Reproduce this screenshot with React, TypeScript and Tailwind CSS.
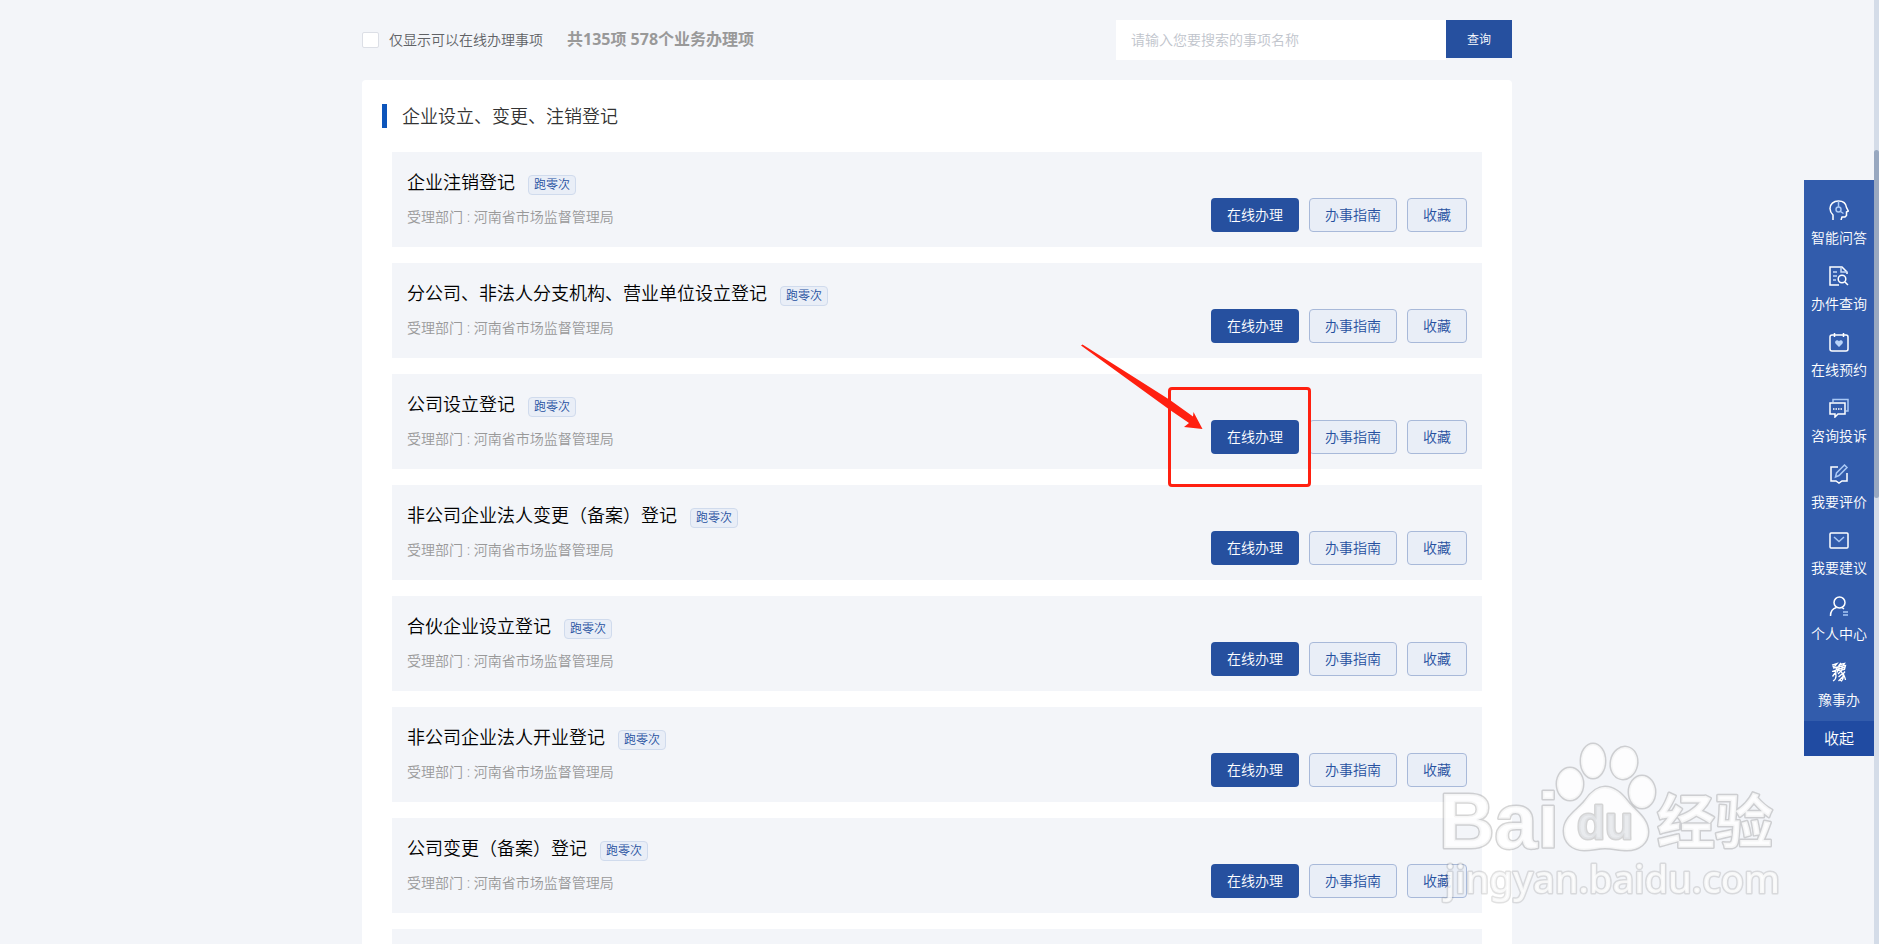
import React, { useState } from 'react';

const items = [
    '企业注销登记',
    '分公司、非法人分支机构、营业单位设立登记',
    '公司设立登记',
    '非公司企业法人变更（备案）登记',
    '合伙企业设立登记',
    '非公司企业法人开业登记',
    '公司变更（备案）登记',
];

const HeadIcon = () => (
    <>
        <path d="M4 20v-5C2 13 1 11 1 8.500C1 4 4.500 1 9.500 1c4.500 0 7.500 2.500 8 6.500l1.800 3.500-1.800 1v3.500l-1.500 1.500h-3l-1 3" />
        <g stroke="#a9c8f5"><path d="M9.500 1v6M11.500 11.500l3 2" /><circle cx="9.500" cy="9.500" r="2.500" /></g>
    </>
);

const DocSearchIcon = () => (
    <>
        <path d="M18 8V6l-5-5H1v18h9" />
        <path d="M12 1v5h6M4 6h4M4 10h4M4 14h3" stroke="#c5d9f7" />
        <circle cx="13" cy="13" r="3.800" />
        <path d="m16 16 3 3" />
    </>
);

const BookingIcon = () => (
    <>
        <rect x="1" y="3" width="18" height="16" rx="2" />
        <path d="M5.500 1v4M14.500 1v4" />
        <path d="M10 15 6.500 11.500c-1.500-2.500 2-4.500 3.500-2.300 1.500-2.200 5-.2 3.500 2.300z" fill="#b9d4fa" stroke="none" />
    </>
);

const ChatIcon = () => (
    <>
        <path d="M4 4V1.500h15V13h-2" stroke="#a9c8f5" />
        <path d="M1 5h15v11H9l-3 3v-3H1z" />
        <path d="M4 11h9" strokeDasharray="1.500 1" />
    </>
);

const RateIcon = () => (
    <>
        <path d="M9 3H2v14h5l3 2 3-2h5V9" />
        <path d="m6.500 13 1-4 8-8 2.500 2.500-8 8z" stroke="#a9c8f5" />
    </>
);

const MailIcon = () => (
    <>
        <rect x="1" y="3" width="18" height="15" rx="1" />
        <path d="m5 7 5 4.500L15 7" stroke="#a9c8f5" />
    </>
);

const PersonIcon = () => (
    <>
        <circle cx="10.500" cy="6.500" r="5.500" />
        <path d="M1.500 20c0-4.500 2-7.500 6-8.500M13 11.500l2 1.500" />
        <path d="M14 16h5M14 19h5" stroke="#a9c8f5" />
    </>
);

const YuIcon = () => (
    <g strokeWidth="1.300">
        <path d="M3 3 8 1.500 6 4 3.500 4.500M4 6l5-1-2 3M3 9.500l6-2-1 3M6.500 8.500 7 14c0 3-1 4-3 5M6 11l-2.500 3.500" />
        <path d="m12 1-2.500 3M11 2.500l4.500-1L14 4M10 4.500l6.500-1-1 4-6 1zM13 4v4M10 6.500l6-1" />
        <path d="M13 8l-4 4M12 9.500c3 2.500 3 7 .5 9.500l-1.500-1M13 12l-3.500 3M14 14.500 9.500 19M16 9.500 14 12M14 11c1 3 2 4 2.500 7" />
    </g>
);

const tools = [
    { label: '智能问答', icon: <HeadIcon /> },
    { label: '办件查询', icon: <DocSearchIcon /> },
    { label: '在线预约', icon: <BookingIcon /> },
    { label: '咨询投诉', icon: <ChatIcon /> },
    { label: '我要评价', icon: <RateIcon /> },
    { label: '我要建议', icon: <MailIcon /> },
    { label: '个人中心', icon: <PersonIcon /> },
    { label: '豫事办', icon: <YuIcon /> },
];

// red frame and arrow that point at the online button of a row
const Pointer = () => (
    <div className="absolute -left-[43px] -top-[33px] w-[143px] h-[100px] border-3 border-[#ff2010] rounded-sm pointer-events-none z-10">
        <svg className="absolute -left-[90px] -top-[46px]" width="124" height="88" viewBox="0 0 124 88" fill="#ff2010">
            <path d="M0 1.500 1.500 .5 89 56l23 16.500.5-4.500 9 17-18.500-2 5-4L89 66z" />
        </svg>
    </div>
);

const ServiceRow: React.FC<any> = ({ title, marked }) => (
    <li className="flex justify-between h-[95px] bg-[#f3f5f9] px-[15px]">
        <div className="pt-4">
            <div className="flex items-center">
                <h3 className="text-lg leading-7 text-black">{title}</h3>
                <span className="ml-[13px] mt-[6px] h-5 px-[5px] border border-[#d0dbed] rounded-sm bg-[#e9eef7] text-xs leading-[18px] text-[#26509f]">跑零次</span>
            </div>
            <p className="mt-[11px] text-sm leading-5 text-[#999]">受理部门 : 河南省市场监督管理局</p>
        </div>
        <div className="relative flex gap-[10px] mt-[46px] h-[34px] text-sm">
            {marked && <Pointer />}
            <button className="w-[88px] rounded-sm bg-[#26509f] text-white">在线办理</button>
            <button className="w-[88px] rounded-sm border border-[#a8b9d9] bg-[#e9eef7] text-[#26509f]">办事指南</button>
            <button className="w-[60px] rounded-sm border border-[#a8b9d9] bg-[#e9eef7] text-[#26509f]">收藏</button>
        </div>
    </li>
);

const Watermark = () => (
    <svg className="fixed right-[90px] bottom-[36px] pointer-events-none" width="350" height="170" viewBox="0 0 350 170">
        <g fill="#fff" fillOpacity="0.800" stroke="#888" strokeOpacity="0.350" strokeWidth="3" strokeLinejoin="round" paintOrder="stroke">
            <ellipse cx="131" cy="46" rx="13" ry="16" />
            <ellipse cx="154" cy="23" rx="12" ry="17" />
            <ellipse cx="185" cy="25" rx="13" ry="16" transform="rotate(12 185 25)" />
            <ellipse cx="203" cy="54" rx="13" ry="16" />
            <path d="M166 49c-9 0-15 7-20 14-7 9-21 16-21 30 0 12 9 19 20 19 8 0 14-2 21-2s14 2 22 2c12 0 21-7 21-18 0-14-13-21-20-30-6-8-13-15-23-15z" />
            <g fontFamily="'Liberation Sans', 'Noto Sans CJK SC', sans-serif" fontWeight="700">
                <text x="0" y="110" fontSize="77">Bai</text>
                <text x="138" y="101" fontSize="46" fill="#e4e6ea">du</text>
                <text x="218" y="105" fontSize="58">经验</text>
            </g>
            <text x="6" y="155" fontSize="38" fontWeight="500" strokeOpacity="0.250" fontFamily="'Noto Sans', sans-serif">jingyan.baidu.com</text>
        </g>
    </svg>
);

export default function App() {
    const [onlyOnline, setOnlyOnline] = useState(false);
    const [keyword, setKeyword] = useState('');

    return (
        <div className="h-screen flex overflow-hidden bg-[#f3f5f9] font-['Noto_Sans','Noto_Sans_CJK_SC',sans-serif] font-[350]">
            <main className="flex-1 min-w-0">
                <div className="w-full max-w-[1150px] mx-auto pt-5">
                    <div className="flex items-start justify-between h-[60px]">
                        <div className="flex items-center h-10">
                            <label className="flex items-center text-sm text-[#606266]">
                                <input
                                    type="checkbox"
                                    checked={onlyOnline}
                                    onChange={e => setOnlyOnline(e.target.checked)}
                                    className="appearance-none w-[17px] h-4 mr-[10px] border border-[#dcdfe6] rounded-xs bg-white checked:bg-[#26509f]"
                                />
                                仅显示可以在线办理事项
                            </label>
                            <span className="ml-6 pb-[2px] text-base font-bold text-[#999]">共135项 578个业务办理项</span>
                        </div>
                        <form className="flex items-start" onSubmit={e => e.preventDefault()}>
                            <input
                                value={keyword}
                                onChange={e => setKeyword(e.target.value)}
                                aria-label="请输入您要搜索的事项名称"
                                placeholder="请输入您要搜索的事项名称"
                                className="w-[330px] h-10 px-[15px] pb-[2px] bg-white text-sm placeholder-[#c0c4cc] outline-none"
                            />
                            <button type="submit" className="w-[66px] h-[38px] pt-[2px] bg-[#26509f] text-white text-xs">查询</button>
                        </form>
                    </div>

                    <section className="bg-white rounded-sm px-5 pt-6">
                        <h2 className="flex items-center h-6 border-l-5 border-[#0d55bb] pl-[15px] text-lg font-[350] text-[#333]">企业设立、变更、注销登记</h2>
                        <ul className="mt-6 px-[10px] pb-4 space-y-4">
                            {items.map((title, i) => (
                                <ServiceRow key={title} title={title} marked={i === 2} />
                            ))}
                            <li className="h-[95px] bg-[#f3f5f9]" />
                        </ul>
                    </section>
                </div>
            </main>

            <nav className="w-[70px] -ml-[70px] mt-[180px] self-start bg-[#325cac] text-white text-sm">
                <div className="pt-[13px]">
                    {tools.map(t => (
                        <a key={t.label} href="#" className="flex flex-col items-center h-[66px] pt-[7px]">
                            <svg width="20" height="20" viewBox="0 0 20 20" fill="none" stroke="currentColor" strokeWidth="1.500">{t.icon}</svg>
                            <span className="mt-2 leading-5">{t.label}</span>
                        </a>
                    ))}
                </div>
                <button className="w-full h-[35px] bg-[#204ba2] text-[15px]">收起</button>
            </nav>

            <div className="w-[5px] shrink-0 bg-[#d4dce8] pt-[150px]">
                <div className="h-[348px] rounded-sm bg-[#98a8c0]" />
            </div>

            <Watermark />
        </div>
    );
}
